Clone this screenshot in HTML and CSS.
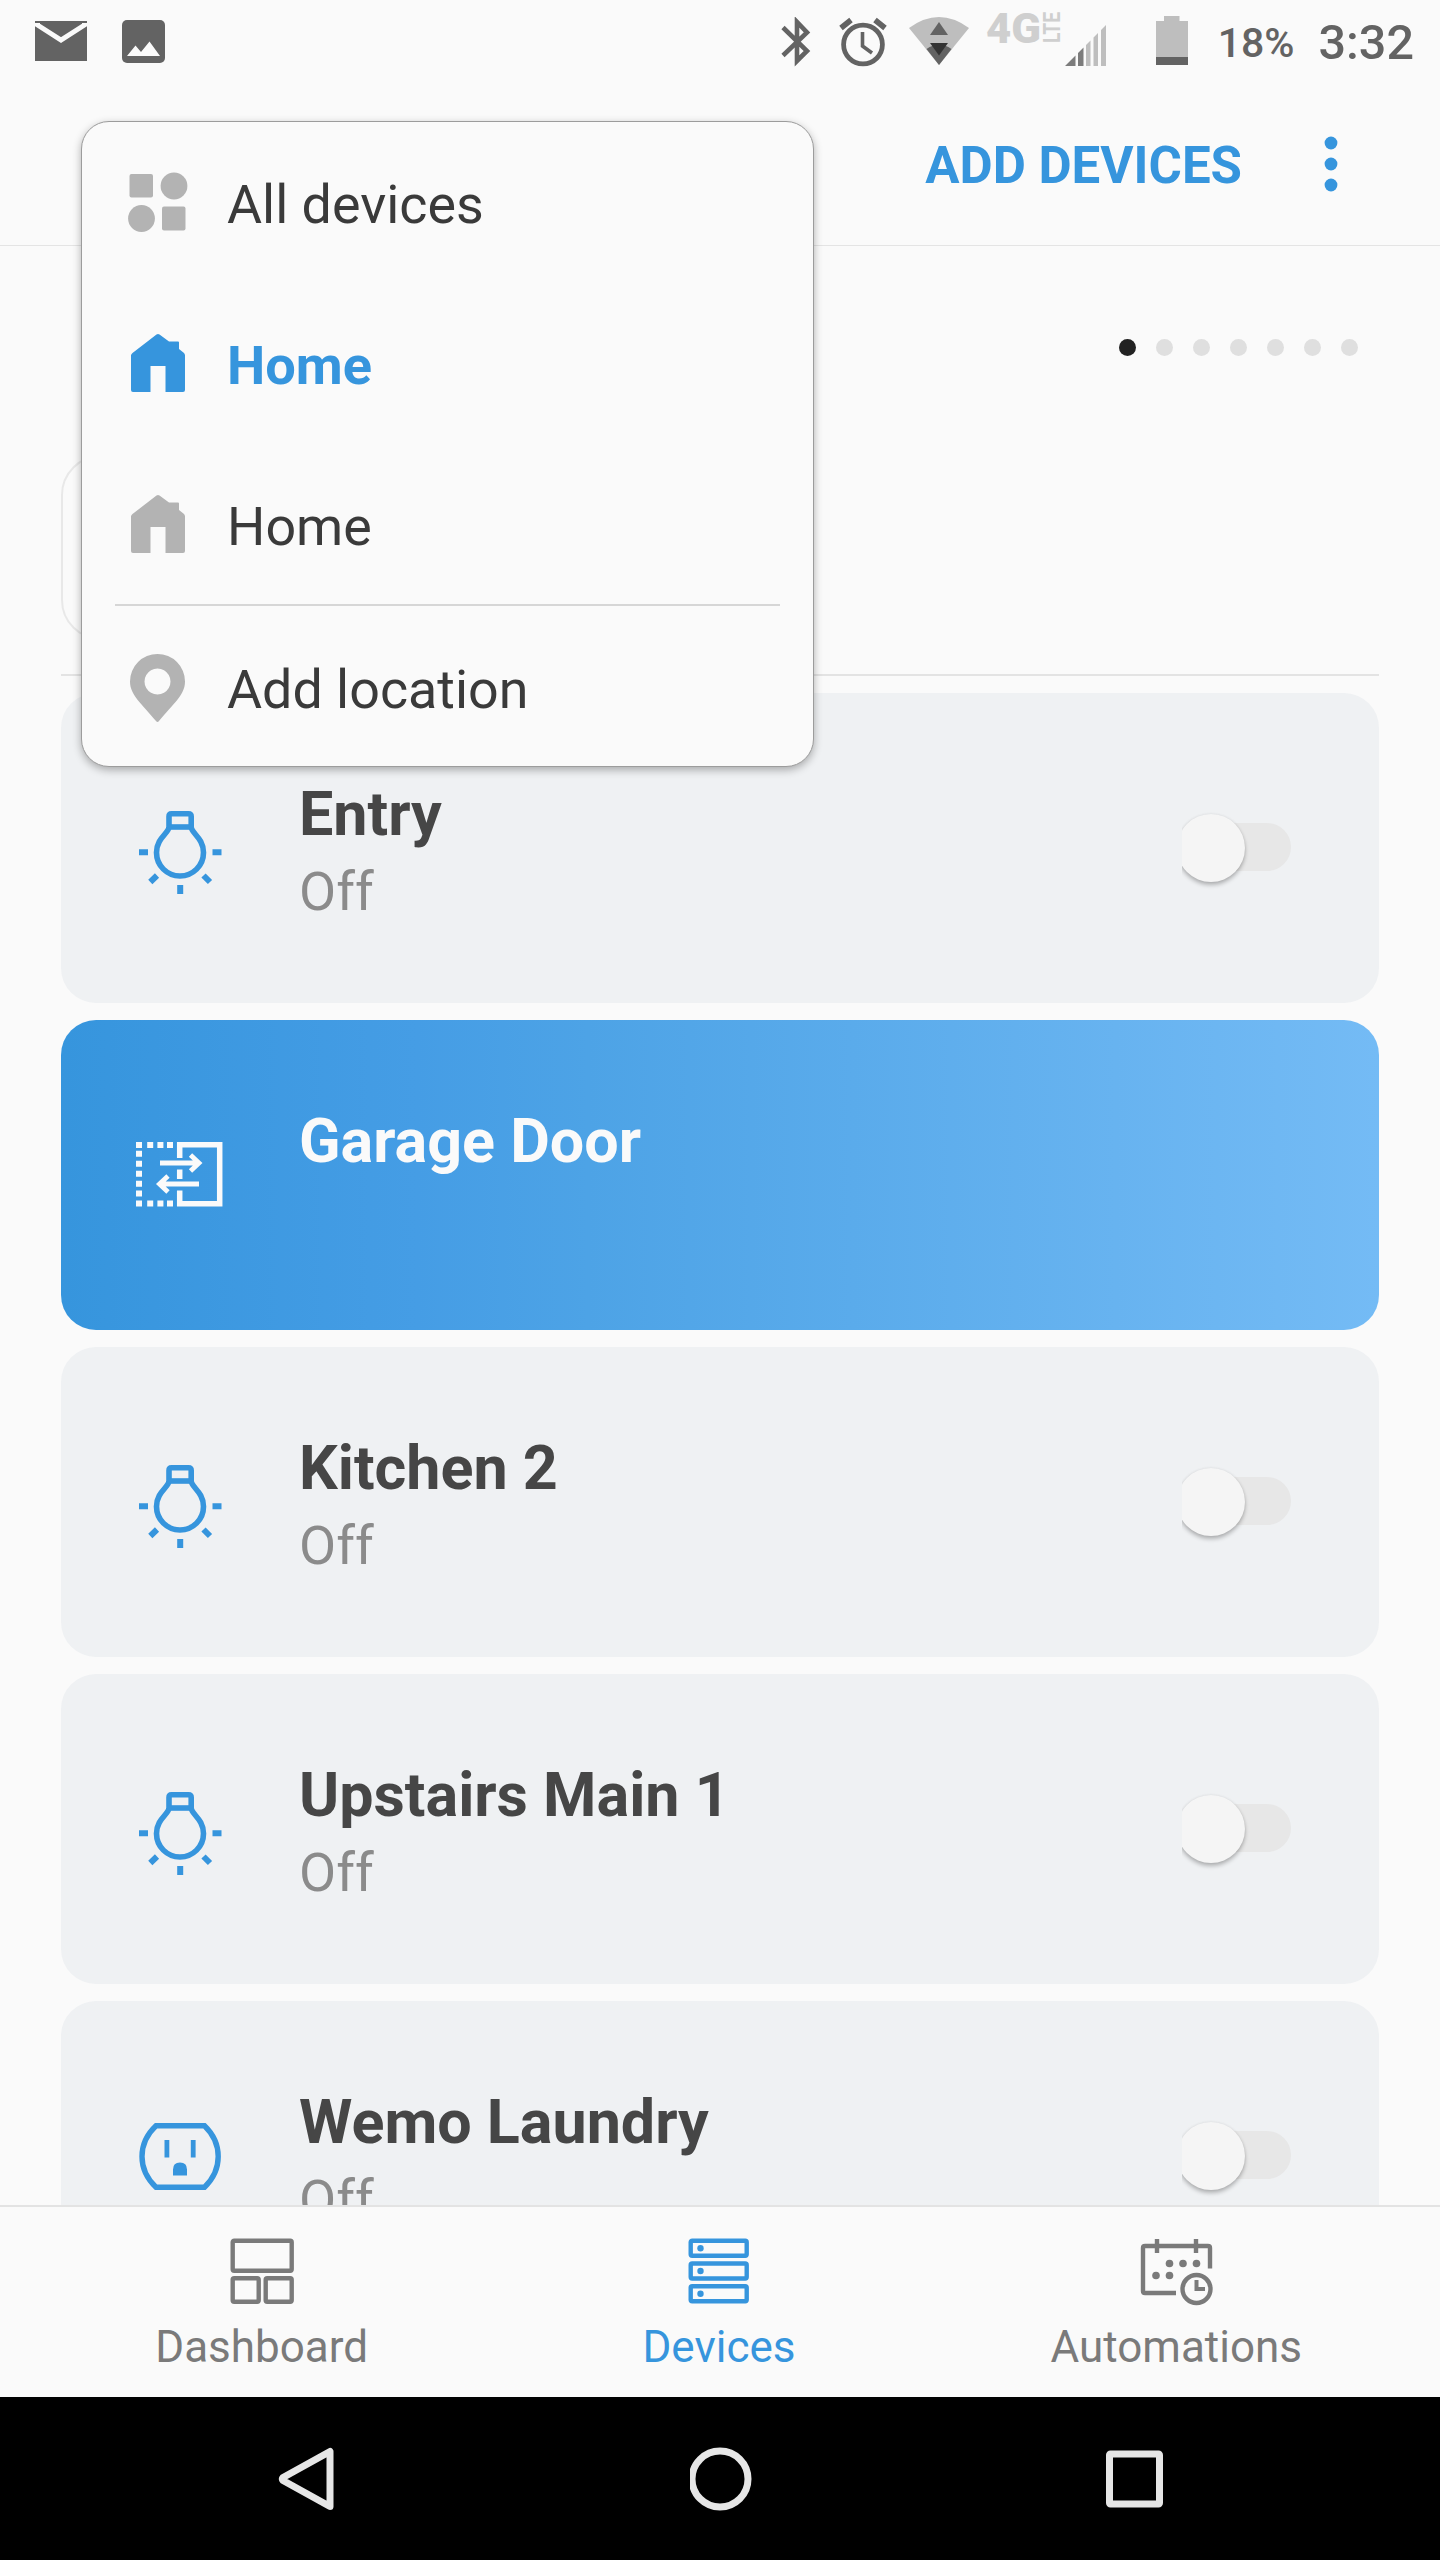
FILE: index.html
```html
<!DOCTYPE html>
<html lang="en">

<head>
    <meta charset="utf-8">
    <meta name="viewport" content="width=device-width, initial-scale=1.0">
    <title>Devices</title>
    <link rel="stylesheet" href="styles.css">
</head>

<body>
    <!-- shared icons -->
    <svg class="sprite" width="0" height="0">
        <symbol id="house" viewBox="0 0 60 62">
            <path d="M3 23.5 Q3 22 4.500 21 L28.500 2.600 Q30 1.500 31.500 2.600 L41 9.500 H50 Q51 9.500 51 10.500 V17 L56 21 Q57 22 57 23.500 V58 Q57 60 55 60 H37.500 V34 H22.500 V60 H5 Q3 60 3 58 Z" />
        </symbol>
        <symbol id="bulb" viewBox="0 0 90 90">
            <g fill="none" stroke="#3695dd" stroke-width="5.600">
                <path d="M34 22 V9.500 Q34 6.800 36.500 6.800 H53.500 Q56.200 6.800 56.200 9.500 V22" />
                <path d="M33 20 H57" />
                <path d="M34 20 C34 26 21.500 31 21.500 45.500 A23.500 23.500 0 0 0 68.500 45.500 C68.500 31 56.200 26 56.200 20" />
                <path d="M4 45.200 H13 M77.500 45.200 H86.500 M45.200 78 V87 M22 68.500 L15.300 75 M68.500 68.500 L75 75" stroke-width="6" />
            </g>
        </symbol>
    </svg>

    <div class="screen">
        <div class="statusbar">
            <svg class="mail" width="52" height="40" viewBox="0 0 52 40">
                <path d="M0 0 H52 V40 H0 Z" fill="#636363" />
                <path d="M2.500 2 V4 L26 19 L49.500 4 V2" fill="none" stroke="#fafafa" stroke-width="5" />
            </svg>
            <svg class="photo" width="43" height="43" viewBox="0 0 43 43">
                <rect width="43" height="43" rx="5" fill="#636363" />
                <path d="M5 36 L13.500 25.500 L19 32 L27.500 21.500 L38 36 Z" fill="#fafafa" />
            </svg>
            <div class="system">
                <svg class="bluetooth" width="32" height="50" viewBox="0 0 32 50">
                    <path d="M2 10.500 L26 34 L16 44 V5 L26 15.500 L2 38.500" fill="none" stroke="#636363" stroke-width="4.600" />
                </svg>
                <svg class="alarm" width="48" height="50" viewBox="0 0 48 50">
                    <g fill="none" stroke="#636363" stroke-width="4.800">
                        <circle cx="24" cy="27.500" r="19.400" />
                        <path d="M23.500 15 V29 L33 36" stroke-width="3.600" />
                        <path d="M2 11 L12 3 M36 3 L46 11" stroke-width="5.600" />
                    </g>
                </svg>
                <svg class="wifi" width="60" height="48" viewBox="0 0 60 48">
                    <path d="M0 11 Q30 -11 60 11 L30 48 Z" fill="#bebebe" />
                    <path d="M17.500 32 Q30 23 42.500 32 L30 48 Z" fill="#636363" />
                    <path d="M21 18 L30 5 L39 18 Z" fill="#636363" />
                    <path d="M21 26 H39 L30 38.500 Z" fill="#333" />
                </svg>
                <svg class="network" width="76" height="81" viewBox="0 0 76 81">
                    <text class="gen" x="0" y="42.500" textLength="55" lengthAdjust="spacingAndGlyphs">4G</text>
                    <text class="lte" x="0" y="0" transform="translate(74 43) rotate(-90)" textLength="31" lengthAdjust="spacingAndGlyphs">LTE</text>
                </svg>
                <svg class="signal" width="41" height="41" viewBox="0 0 41 41">
                    <path d="M0 41 L10.500 30.500 V41 Z M13 41 V28 L18.500 22.500 V41 Z" fill="#7c7c7c" />
                    <path d="M21 41 V20 L25.500 15.500 V41 Z M28.500 41 V12.500 L33 8 V41 Z M36 41 V5 L41 0 V41 Z" fill="#bebebe" />
                </svg>
                <svg class="battery" width="32" height="49" viewBox="0 0 32 49">
                    <path d="M0 5 H8 V0 H23.500 V5 H32 V41 H0 Z" fill="#bebebe" />
                    <path d="M0 41 H32 V49 H0 Z" fill="#636363" />
                </svg>
                <span class="percent">18%</span>
                <span class="clock">3:32</span>
            </div>
        </div>

        <div class="header">
            <span class="add">ADD DEVICES</span>
            <svg width="14" height="56" viewBox="0 0 14 56" fill="#3695dd">
                <circle cx="7" cy="7" r="6.400" />
                <circle cx="7" cy="28" r="6.400" />
                <circle cx="7" cy="49" r="6.400" />
            </svg>
        </div>

        <div class="favorites">
            <div class="pager">
                <i class="dot on"></i><i class="dot"></i><i class="dot"></i><i class="dot"></i><i class="dot"></i><i class="dot"></i><i class="dot"></i>
            </div>
            <div class="tile"></div>
        </div>

        <div class="list">
            <div class="card">
                <svg class="icon bulb" width="90" height="90"><use href="#bulb" /></svg>
                <div class="info">
                    <div class="name">Entry</div>
                    <div class="state">Off</div>
                </div>
                <div class="toggle"></div>
            </div>
            <div class="card active">
                <svg class="icon" width="90" height="90" viewBox="0 0 90 90">
                    <g fill="none" stroke="#fafafa" stroke-width="5.500">
                        <path d="M44.700 28 V14.800 H84.700 V73.700 H44.700 V60.500 M44.700 39.500 V49" />
                        <path d="M25 33 H64 M55.500 25 L64 33 L55.500 41" stroke-width="4.800" />
                        <path d="M64 54 H24 M33 46 L24.500 54 L33 62" stroke-width="4.800" />
                    </g>
                    <g fill="#fafafa">
                        <path d="M1 12h6v6h-6z M12.200 12h6v6h-6z M22.400 12h6v6h-6z M32 12h6v6h-6z" />
                        <path d="M1 70.500h6v6h-6z M12.200 70.500h6v6h-6z M22.400 70.500h6v6h-6z M32 70.500h6v6h-6z" />
                        <path d="M1 20.700h6v6h-6z M1 30.700h6v6h-6z M1 40.700h6v6h-6z M1 50.700h6v6h-6z M1 60.500h6v6h-6z" />
                    </g>
                </svg>
                <div class="info">
                    <div class="name">Garage Door</div>
                </div>
            </div>
            <div class="card">
                <svg class="icon bulb" width="90" height="90"><use href="#bulb" /></svg>
                <div class="info">
                    <div class="name">Kitchen 2</div>
                    <div class="state">Off</div>
                </div>
                <div class="toggle"></div>
            </div>
            <div class="card">
                <svg class="icon bulb" width="90" height="90"><use href="#bulb" /></svg>
                <div class="info">
                    <div class="name">Upstairs Main 1</div>
                    <div class="state">Off</div>
                </div>
                <div class="toggle"></div>
            </div>
            <div class="card">
                <svg class="icon" width="90" height="90" viewBox="0 0 90 90">
                    <path d="M21 14.800 H69.500 Q83.200 28 83.200 45.500 Q83.200 63 69.500 76.200 H21 Q7 63 7 45.500 Q7 28 21 14.800 Z" fill="none" stroke="#3695dd" stroke-width="5.400" />
                    <path d="M29.500 29h4.800v17.500h-4.800z M55.800 29h4.800v17.500h-4.800z M38 64.500 V58.500 Q38 51.500 45 51.500 Q52 51.500 52 58.500 V64.500 Z" fill="#3695dd" />
                </svg>
                <div class="info">
                    <div class="name">Wemo Laundry</div>
                    <div class="state">Off</div>
                </div>
                <div class="toggle"></div>
            </div>
        </div>

        <div class="tabs">
            <div class="tab">
                <svg width="76" height="72" viewBox="0 0 76 72" fill="none" stroke="#7a7a7a" stroke-width="4.400">
                    <rect x="8.700" y="5.700" width="59" height="30" rx="1.500" />
                    <rect x="8.700" y="43.200" width="26" height="23.500" rx="1.500" />
                    <rect x="41.700" y="43.200" width="26" height="23.500" rx="1.500" />
                </svg>
                <span>Dashboard</span>
            </div>
            <div class="tab selected">
                <svg width="76" height="72" viewBox="0 0 76 72" fill="none" stroke="#3695dd" stroke-width="4.400">
                    <rect x="9.700" y="5.700" width="56" height="15" rx="1.500" />
                    <rect x="9.700" y="28.500" width="56" height="15" rx="1.500" />
                    <rect x="9.700" y="51.300" width="56" height="15" rx="1.500" />
                    <g fill="#3695dd" stroke="none">
                        <circle cx="19.500" cy="13.300" r="3.200" />
                        <circle cx="19.500" cy="36" r="3.200" />
                        <circle cx="19.500" cy="58.800" r="3.200" />
                    </g>
                </svg>
                <span>Devices</span>
            </div>
            <div class="tab">
                <svg width="76" height="72" viewBox="0 0 76 72" fill="none" stroke="#7a7a7a" stroke-width="4.400">
                    <path d="M38 58 H7 Q5 58 5 56 V13 Q5 11 7 11 H70 Q72 11 72 13 V33.500" />
                    <path d="M19 4 V18 M58 4 V18" />
                    <circle cx="58.500" cy="54" r="14" />
                    <path d="M58.500 45 V54 H67" stroke-width="4" />
                    <g fill="#7a7a7a" stroke="none">
                        <circle cx="31.500" cy="28.500" r="3.800" />
                        <circle cx="45" cy="28.500" r="3.800" />
                        <circle cx="58.500" cy="28.500" r="3.800" />
                        <circle cx="18" cy="40.500" r="3.800" />
                        <circle cx="31.500" cy="40.500" r="3.800" />
                    </g>
                </svg>
                <span>Automations</span>
            </div>
        </div>

        <div class="navkeys">
            <svg width="64" height="64" viewBox="0 0 64 64">
                <path d="M54 4.500 V59.500 L7 33.500 Q5.500 32 7 30.500 Z" />
            </svg>
            <svg width="64" height="64" viewBox="0 0 64 64">
                <circle cx="30" cy="32" r="28" />
            </svg>
            <svg width="64" height="64" viewBox="0 0 64 64">
                <rect x="6.500" y="7" width="50" height="50" rx="1" />
            </svg>
        </div>

        <!-- location picker, opens over the page -->
        <div class="menu">
            <div class="item">
                <svg width="60" height="62" viewBox="0 0 60 62" fill="#b3b3b3">
                    <rect x="1.500" y="3" width="23.500" height="23.500" rx="2" />
                    <circle cx="46" cy="15" r="13.400" />
                    <circle cx="13.500" cy="47.500" r="13.400" />
                    <rect x="34" y="35.500" width="23.500" height="24" rx="2" />
                </svg>
                <span>All devices</span>
            </div>
            <div class="item current">
                <svg width="60" height="62" fill="#3695dd"><use href="#house" /></svg>
                <span>Home</span>
            </div>
            <div class="item">
                <svg width="60" height="62" fill="#b3b3b3"><use href="#house" /></svg>
                <span>Home</span>
            </div>
            <div class="item last">
                <svg width="60" height="70" viewBox="0 0 60 70">
                    <path d="M29.500 1 A27.500 27.500 0 0 1 57 28.500 C57 42 45 51 31 68 Q29.500 70 28 68 C14 51 2 42 2 28.500 A27.500 27.500 0 0 1 29.500 1 Z M29.500 15.500 a13 13 0 1 0 .01 0 Z" fill="#b3b3b3" fill-rule="evenodd" />
                </svg>
                <span>Add location</span>
            </div>
        </div>
    </div>
</body>

</html>
```
FILE: styles.css
```css
* {
    box-sizing: border-box;
}

body {
    margin: 0;
    background: #fafafa;
    font-family: Roboto, "Liberation Sans", sans-serif;
}

svg {
    display: block;
    flex-shrink: 0;
}

.sprite {
    position: absolute;
}

.screen {
    position: relative;
    display: flex;
    flex-direction: column;
    width: 1440px;
    height: 2560px;
    overflow: hidden;
}

/* status bar */
.statusbar {
    display: flex;
    align-items: center;
    height: 81px;
    padding: 0 26px 0 35px;
    color: #636363;
}

.photo {
    margin: 2px 0 0 35px;
}

.system {
    display: flex;
    align-items: center;
    height: 81px;
    margin-left: auto;
}

.bluetooth {
    margin-top: 2px;
}

.alarm {
    margin: 2px 0 0 26px;
}

.wifi {
    margin-left: 22px;
}

.network {
    margin-left: 17px;
}

.gen {
    font-size: 42px;
    font-weight: 900;
    fill: #cfcfcf;
}

.lte {
    font-size: 23px;
    font-weight: 700;
    fill: #cfcfcf;
}

.signal {
    margin: 10px 0 0 3px;
}

.battery {
    margin-left: 50px;
}

.percent {
    margin: 4px 0 0 30px;
    font-size: 41px;
    font-weight: 500;
}

.clock {
    margin: 4px 0 0 24px;
    font-size: 48.5px;
    font-weight: 500;
}

/* header */
.header {
    display: flex;
    align-items: center;
    justify-content: flex-end;
    gap: 82px;
    height: 165px;
    padding-right: 102px;
    border-bottom: 1px solid #e4e4e4;
}

.header svg {
    margin-top: 1px;
}

.add {
    margin-top: 4px;
    color: #3695dd;
    font-size: 51px;
    font-weight: 700;
}

/* favorites pager */
.favorites {
    height: 430px;
    margin: 0 61px;
    padding-top: 93px;
    border-bottom: 2px solid #e3e3e3;
}

.pager {
    display: flex;
    justify-content: flex-end;
    gap: 20px;
    padding-right: 21px;
}

.dot {
    width: 17px;
    height: 17px;
    border-radius: 50%;
    background: #dfdfdf;
}

.dot.on {
    background: #222;
}

.tile {
    width: 642px;
    height: 185px;
    margin-top: 99px;
    border: 2px solid #e8e8e8;
    border-radius: 40px;
}

/* device cards */
.list {
    display: flex;
    flex: 1;
    flex-direction: column;
    gap: 17px;
    min-height: 0;
    padding: 17px 61px 0;
    overflow: hidden;
}

.card {
    display: flex;
    flex-shrink: 0;
    height: 310px;
    padding: 0 88px 0 74px;
    background: #eff1f3;
    border-radius: 35px;
}

.card.active {
    background: linear-gradient(90deg, #3695dd, #459de5 27%, #4da3e6 40%, #74bbf5);
}

.icon {
    margin-top: 110px;
}

.bulb {
    margin-top: 114px;
}

.info {
    flex: 1;
    margin-left: 74px;
    padding-top: 85px;
}

.name {
    color: #464646;
    font-size: 61px;
    font-weight: 700;
    line-height: 72px;
}

.active .name {
    color: #fafafa;
}

.state {
    color: #8b8b8b;
    font-size: 54px;
    line-height: 83px;
}

.toggle {
    position: relative;
    align-self: center;
    width: 109px;
    height: 84px;
    overflow: hidden;
}

.toggle::before {
    content: "";
    position: absolute;
    top: 17px;
    right: 0;
    width: 90px;
    height: 48px;
    border-radius: 24px;
    background: #e7e7e7;
}

.toggle::after {
    content: "";
    position: absolute;
    top: 8px;
    left: -5px;
    width: 68px;
    height: 68px;
    border-radius: 50%;
    background: #f5f5f5;
    box-shadow: 0 3px 4px rgba(0, 0, 0, .26), 0 0 3px rgba(0, 0, 0, .08);
}

/* bottom tabs */
.tabs {
    display: flex;
    height: 192px;
    padding: 28px 35px 0 33px;
    border-top: 2px solid #e3e3e3;
    background: #fafafa;
}

.tab {
    display: flex;
    flex: 1;
    flex-direction: column;
    align-items: center;
    gap: 14px;
    color: #7a7a7a;
    font-size: 44px;
    line-height: 52px;
}

.tab.selected {
    color: #3695dd;
}

.navkeys {
    display: flex;
    align-items: center;
    justify-content: space-between;
    height: 163px;
    padding: 0 273px 0 276px;
    background: #000;
}

.navkeys svg {
    fill: none;
    stroke: #e6e6e6;
    stroke-width: 7px;
    stroke-linejoin: round;
}

/* location menu */
.menu {
    position: absolute;
    top: 121px;
    left: 81px;
    width: 733px;
    height: 646px;
    padding: 2px 33px 0;
    border: 1px solid #9c9c9c;
    border-radius: 28px;
    background: #fafafa;
    box-shadow: 0 3px 9px rgba(0, 0, 0, .3);
}

.item {
    display: flex;
    align-items: center;
    gap: 39px;
    height: 161px;
    padding-left: 13px;
    color: #3a3a3a;
    font-size: 53.8px;
}

.item svg {
    margin-bottom: 5px;
}

.current {
    color: #3695dd;
    font-size: 54.2px;
    font-weight: 700;
}

.last {
    margin-top: -3px;
    padding-top: 7px;
    border-top: 2px solid #d6d6d6;
}

.last svg {
    margin-bottom: 3px;
}
```
